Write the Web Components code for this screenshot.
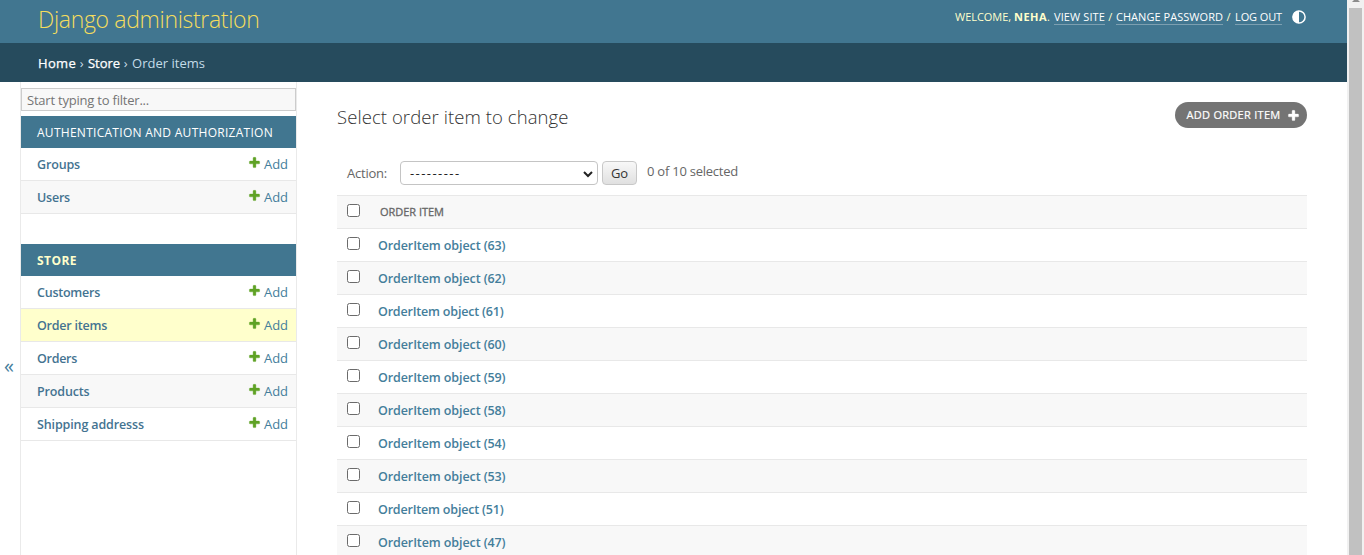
<!DOCTYPE html>
<html lang="en">
<head>
<meta charset="utf-8">
<title>Select order item to change | Django administration</title>
<style>
html,body{margin:0;height:100%;overflow:hidden;background:#fff}
body{font:13px/16px "Open Sans","Noto Sans",sans-serif;color:#666}
</style>
</head>
<body>
<admin-page></admin-page>
<script>
function define(name, html, setup) {
  customElements.define(name, class extends HTMLElement {
    connectedCallback() {
      if (this.shadowRoot) return;
      const t = document.createElement('template');
      t.innerHTML = html(this);
      this.attachShadow({mode: 'open'}).append(t.content.cloneNode(true));
      if (setup) setup(this);
    }
  });
}
const PLUS = 'M1600 796v192q0 40-28 68t-68 28h-416v416q0 40-28 68t-68 28h-192q-40 0-68-28t-28-68v-416h-416q-40 0-68-28t-28-68v-192q0-40 28-68t68-28h416v-416q0-40 28-68t68-28h192q40 0 68 28t28 68v416h416q40 0 68 28t28 68z';

// A single line of text whose tracking is adjusted to fill the width w.
define('fit-text', () => `<style>
:host{display:inline-block;white-space:pre;flex:none}
span{display:inline-block}
</style><span><slot></slot></span>`, el => {
  const w = +el.getAttribute('w'), n = el.textContent.length;
  const s = el.shadowRoot.querySelector('span');
  const natural = s.getBoundingClientRect().width;
  s.style.letterSpacing = ((w - natural) / n).toFixed(4) + 'px';
  el.style.width = w + 'px';
});

define('plus-icon', () => `<style>:host{display:block;width:13px;height:13px;flex:none}svg{display:block;width:100%;height:100%}</style>
<svg viewBox="0 0 1792 1792"><path fill="currentColor" stroke="currentColor" stroke-width="50" d="${PLUS}"/></svg>`);

define('check-box', () => `<style>:host{display:block;box-sizing:border-box;width:13px;height:13px;border:1px solid #6b6b6b;border-radius:2.5px;background:#fff;flex:none}</style>`);

define('site-header', () => `<style>
:host{display:flex;justify-content:space-between;box-sizing:border-box;height:43px;padding:0 41px 0 38px;background:#417690;color:#ffc}
.brand{font-size:23px;font-weight:300;line-height:38px;color:#f5dd5d}
.tools{display:flex;font-size:11px;line-height:16px;padding-top:9px}
.link{color:#fff;border-bottom:1px solid #7c9fb1;height:15px}
b{font-weight:700}
svg{width:14px;height:14px;margin:1px 0 0 10px}
</style>
<fit-text class="brand" w="221.5">Django administration</fit-text>
<div class="tools"><fit-text w="59">WELCOME, </fit-text><b><fit-text w="33">NEHA</fit-text></b><fit-text w="7">. </fit-text><fit-text class="link" w="51">VIEW SITE</fit-text><fit-text w="11"> / </fit-text><fit-text class="link" w="107">CHANGE PASSWORD</fit-text><fit-text w="12"> / </fit-text><fit-text class="link" w="47">LOG OUT</fit-text>
<svg viewBox="0 0 14 14"><circle cx="7" cy="7" r="6.1" fill="none" stroke="#fff" stroke-width="1.5"/><path d="M7 .8a6.2 6.2 0 0 0 0 12.4z" fill="#fff"/></svg></div>`);

define('bread-crumbs', () => `<style>
:host{display:flex;height:39px;line-height:40px;padding-left:38px;background:#264b5d;color:#c4dce8;font-size:13px}
.a{color:#fff;font-weight:500;-webkit-text-stroke:.25px}
</style><fit-text class="a" w="38">Home</fit-text><fit-text w="12"> › </fit-text><fit-text class="a" w="32">Store</fit-text><fit-text w="12"> › </fit-text><fit-text w="73">Order items</fit-text>`);

define('nav-module', el => `<style>
:host{display:block;margin-bottom:30px}
h2{margin:0;height:32px;padding-left:16px;background:#417690;color:#fff;font-size:12px;font-weight:400;line-height:33px}
:host([current]) h2{color:#ffc;font-weight:700}
</style><h2><fit-text w="${el.getAttribute('w')}">${el.getAttribute('caption')}</fit-text></h2><slot></slot>`);

define('nav-row', el => `<style>
:host{display:flex;box-sizing:border-box;height:33px;padding:0 8px 0 16px;border-bottom:1px solid #e8e8e8;color:#447e9b;line-height:32px;background:#fff}
:host([alt]){background:#f8f8f8}
:host([current]){background:#ffc}
.n{font-weight:600;font-size:12.5px;line-height:34px;height:32px;color:#447391}
.add{display:flex;margin-left:auto}
plus-icon{margin:8px 3px 0 0;color:#5fa225}
</style><fit-text class="n" w="${el.getAttribute('w')}">${el.getAttribute('label')}</fit-text>
<span class="add"><plus-icon></plus-icon><fit-text w="24">Add</fit-text></span>`);

define('side-bar', () => `<style>
:host{display:block;box-sizing:border-box;width:277px;border:solid #eaeaea;border-width:0 1px;padding-top:6px;flex:none}
.f{box-sizing:border-box;height:23px;margin-bottom:5px;padding-left:5px;border:1px solid #ccc;background:#f8f8f8;color:#757575;line-height:22px}
</style>
<div class="f"><fit-text w="122">Start typing to filter...</fit-text></div>
<nav-module caption="AUTHENTICATION AND AUTHORIZATION" w="236"><nav-row w="43" label="Groups"></nav-row><nav-row w="33" alt label="Users"></nav-row></nav-module>
<nav-module caption="STORE" w="40" current><nav-row w="63" label="Customers"></nav-row><nav-row w="70" current label="Order items"></nav-row><nav-row w="40" label="Orders"></nav-row><nav-row w="52.5" alt label="Products"></nav-row><nav-row w="107" label="Shipping addresss"></nav-row></nav-module>`);

define('result-row', el => `<style>
:host{display:flex;box-sizing:border-box;height:33px;padding:8px 10px 0;border-bottom:1px solid #e8e8e8;background:#fff}
:host([alt]){background:#f8f8f8}
fit-text{margin:1px 0 0 18px;font-weight:600;color:#447e9b;font-size:12.5px}
</style><check-box></check-box><fit-text w="${/1\)/.test(el.textContent) ? 125.5 : 127.5}">${el.textContent}</fit-text>`);

define('change-list', () => `<style>
:host{display:block;width:970px;padding:20px 0 0 40px}
.top{display:flex;justify-content:space-between;height:59px}
h1{margin:0;font-size:18.5px;font-weight:300;line-height:30px;color:#333}
.addb{display:flex;box-sizing:border-box;width:132px;height:26px;padding-left:11.5px;border-radius:13px;background:#747474;color:#fff;font-size:11px;line-height:26px;-webkit-text-stroke:.2px}
.addb plus-icon{margin:7px 0 0 6.5px}
.act{display:flex;height:34px;padding-left:10px;line-height:25px}
.sel{display:flex;justify-content:space-between;box-sizing:border-box;width:198px;height:24px;margin:0 4px 0 13px;padding:0 4px 0 9px;border:1px solid #c4c4c4;border-radius:4px;line-height:23px;color:#222}
.sel svg{width:10px;height:8px;margin-top:8px}
.go{box-sizing:border-box;width:35px;height:24px;margin-right:10px;padding-left:8px;border:1px solid #c8c8c8;border-radius:4px;background:linear-gradient(#f8f8f8,#e0e0e0);line-height:23px;color:#333}
.cnt{line-height:21px}
.head{display:flex;box-sizing:border-box;height:34px;padding:8px 10px 0;background:#f8f8f8;border:solid #e8e8e8;border-width:1px 0}
.head fit-text{margin-left:20px;font-size:11px;-webkit-text-stroke:.3px}
</style>
<div class="top"><h1><fit-text w="231.5">Select order item to change</fit-text></h1>
<div class="addb"><fit-text w="94">ADD ORDER ITEM</fit-text><plus-icon></plus-icon></div></div>
<div class="act"><fit-text w="40">Action:</fit-text>
<div class="sel"><fit-text w="50.5">---------</fit-text><svg viewBox="0 0 10 8"><path d="M1 2l4 4 4-4" fill="none" stroke="#222" stroke-width="2"/></svg></div>
<div class="go"><fit-text w="17">Go</fit-text></div><fit-text class="cnt" w="91">0 of 10 selected</fit-text></div>
<div class="head"><check-box></check-box><fit-text w="64">ORDER ITEM</fit-text></div>
${[63,62,61,60,59,58,54,53,51,47].map((n, i) => `<result-row${i % 2 ? ' alt' : ''}>OrderItem object (${n})</result-row>`).join('')}`);

define('scroll-bar', () => `<style>
:host{display:flex;flex-direction:column;align-items:center;width:17px;height:100%;background:#f1f1f1;flex:none}
svg{display:block;width:8px;height:8px;flex:none}
div{width:13px;flex:1;background:#c1c1c1}
</style><svg viewBox="0 0 8 8"><path d="M3-1h2l3 3H0z" fill="#8c8c8c"/></svg><div></div>`);

define('admin-page', () => `<style>
:host{display:flex;height:555px;overflow:hidden}
.p{flex:1;min-width:0;display:flex;flex-direction:column}
.m{display:flex;flex:1;min-height:0}
.t{width:20px;flex:none;display:flex;align-items:center;box-sizing:border-box;padding:95px 0 0 4px;color:#447e9b;font-size:20px;line-height:20px}
</style><div class="p"><site-header></site-header><bread-crumbs></bread-crumbs>
<div class="m"><div class="t"><fit-text w="10">«</fit-text></div><side-bar></side-bar><change-list></change-list></div></div><scroll-bar></scroll-bar>`);
</script>
</body>
</html>
